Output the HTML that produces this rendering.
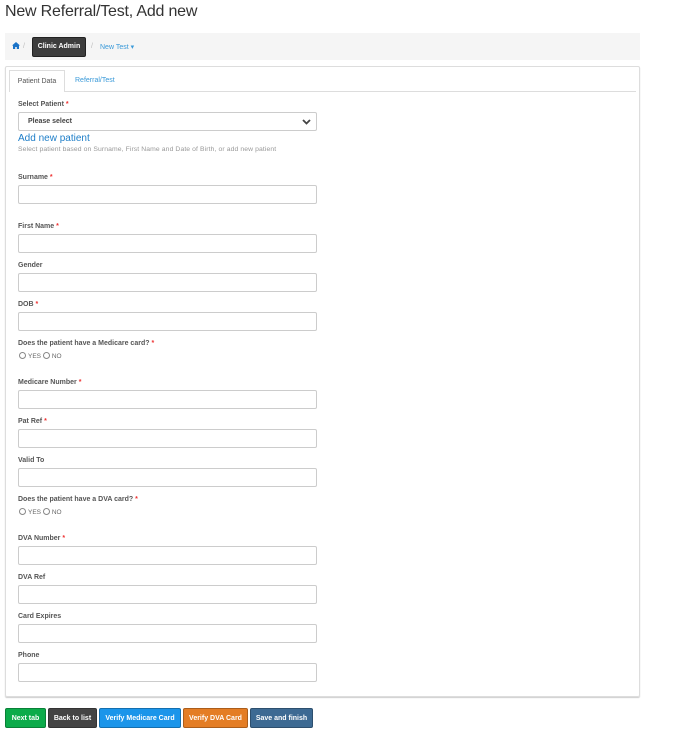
<!DOCTYPE html>
<html><head><meta charset="utf-8"><style>
*{box-sizing:border-box;margin:0;padding:0}
body{width:674px;height:751px;background:#fff;font-family:"Liberation Sans",sans-serif;position:relative;overflow:hidden;color:#555}
.a{position:absolute}
h1{position:absolute;left:5px;top:3px;font-size:16px;font-weight:normal;color:#333;letter-spacing:-0.2px}
.bc{left:5px;top:33px;width:635px;height:27px;background:#f5f5f5}
.ca{left:32px;top:37px;width:54px;height:20px;background:#3d3d3d;border:1px solid #222;border-radius:2px;color:#fff;font-size:7px;font-weight:bold;text-align:center;line-height:18px}
.panel{left:5px;top:66px;width:635px;height:631px;border:1px solid #ddd;border-radius:2px;box-shadow:0 1px 1px #ccc}
.lbl{position:absolute;left:18px;font-size:7px;font-weight:bold;color:#555}
.lbl i{color:#e33;font-style:normal}
.in{position:absolute;left:18px;width:299px;height:19px;border:1px solid #ccc;border-radius:2px;background:#fff}
.rad{position:absolute;left:19px;font-size:6.5px;color:#666}
.rad b{display:inline-block;width:7px;height:7px;border:1px solid #888;border-radius:50%;vertical-align:-1px;margin-right:2px}
.btn{position:absolute;top:708px;height:20px;font-size:7px;font-weight:bold;color:#fff;text-align:center;line-height:19px;border-radius:2px;border:1px solid rgba(0,0,0,.25)}
</style></head><body>
<h1>New Referral/Test, Add new</h1>
<div class="a bc"></div>
<svg class="a" style="left:12px;top:42px" width="8" height="7" viewBox="0 0 8 7"><path d="M4 0L0 3.5h1V7h2.2V5h1.6v2H7V3.5h1z" fill="#1a73c8"/></svg>
<div class="a" style="left:23px;top:43px;font-size:7px;color:#bbb">/</div>
<div class="a ca">Clinic Admin</div>
<div class="a" style="left:91px;top:43px;font-size:7px;color:#bbb">/</div>
<div class="a" style="left:100px;top:43px;font-size:7px;color:#3a9ad9">New Test ▾</div>
<div class="a panel"></div>
<div class="a" style="left:9px;top:91px;width:627px;height:1px;background:#ddd"></div>
<div class="a" style="left:9px;top:70px;width:56px;height:22px;border:1px solid #ddd;border-bottom:none;background:#fff;font-size:7px;color:#555;text-align:center;line-height:21px">Patient Data</div>
<div class="a" style="left:75px;top:77px;font-size:7px;color:#3a9ad9">Referral/Test</div>
<div class="lbl" style="top:101px">Select Patient <i>*</i></div>
<div class="in" style="top:112px"><span style="position:absolute;left:9px;top:5px;font-size:7px;font-weight:bold;color:#444">Please select</span>
<svg style="position:absolute;right:5px;top:6px" width="9" height="6" viewBox="0 0 9 6"><path d="M1 1l3.5 3.5L8 1" stroke="#444" stroke-width="1.8" fill="none"/></svg></div>
<div class="a" style="left:18px;top:133px;font-size:10px;color:#1e7ec8">Add new patient</div>
<div class="a" style="left:18px;top:146px;font-size:6.8px;color:#999;letter-spacing:0.1px">Select patient based on Surname, First Name and Date of Birth, or add new patient</div>
<div class="lbl" style="top:174px">Surname <i>*</i></div><div class="in" style="top:185px"></div>
<div class="lbl" style="top:223px">First Name <i>*</i></div><div class="in" style="top:234px"></div>
<div class="lbl" style="top:262px">Gender</div><div class="in" style="top:273px"></div>
<div class="lbl" style="top:301px">DOB <i>*</i></div><div class="in" style="top:312px"></div>
<div class="lbl" style="top:340px">Does the patient have a Medicare card? <i>*</i></div>
<div class="rad" style="top:352px"><b></b>YES <b></b>NO</div>
<div class="lbl" style="top:379px">Medicare Number <i>*</i></div><div class="in" style="top:390px"></div>
<div class="lbl" style="top:418px">Pat Ref <i>*</i></div><div class="in" style="top:429px"></div>
<div class="lbl" style="top:457px">Valid To</div><div class="in" style="top:468px"></div>
<div class="lbl" style="top:496px">Does the patient have a DVA card? <i>*</i></div>
<div class="rad" style="top:508px"><b></b>YES <b></b>NO</div>
<div class="lbl" style="top:535px">DVA Number <i>*</i></div><div class="in" style="top:546px"></div>
<div class="lbl" style="top:574px">DVA Ref</div><div class="in" style="top:585px"></div>
<div class="lbl" style="top:613px">Card Expires</div><div class="in" style="top:624px"></div>
<div class="lbl" style="top:652px">Phone</div><div class="in" style="top:663px"></div>
<div class="btn" style="left:5px;width:41px;background:#0cab4a">Next tab</div>
<div class="btn" style="left:48px;width:49px;background:#444">Back to list</div>
<div class="btn" style="left:99px;width:82px;background:#1b95ea">Verify Medicare Card</div>
<div class="btn" style="left:183px;width:65px;background:#e47d25">Verify DVA Card</div>
<div class="btn" style="left:250px;width:63px;background:#3d6a93">Save and finish</div>
</body></html>
